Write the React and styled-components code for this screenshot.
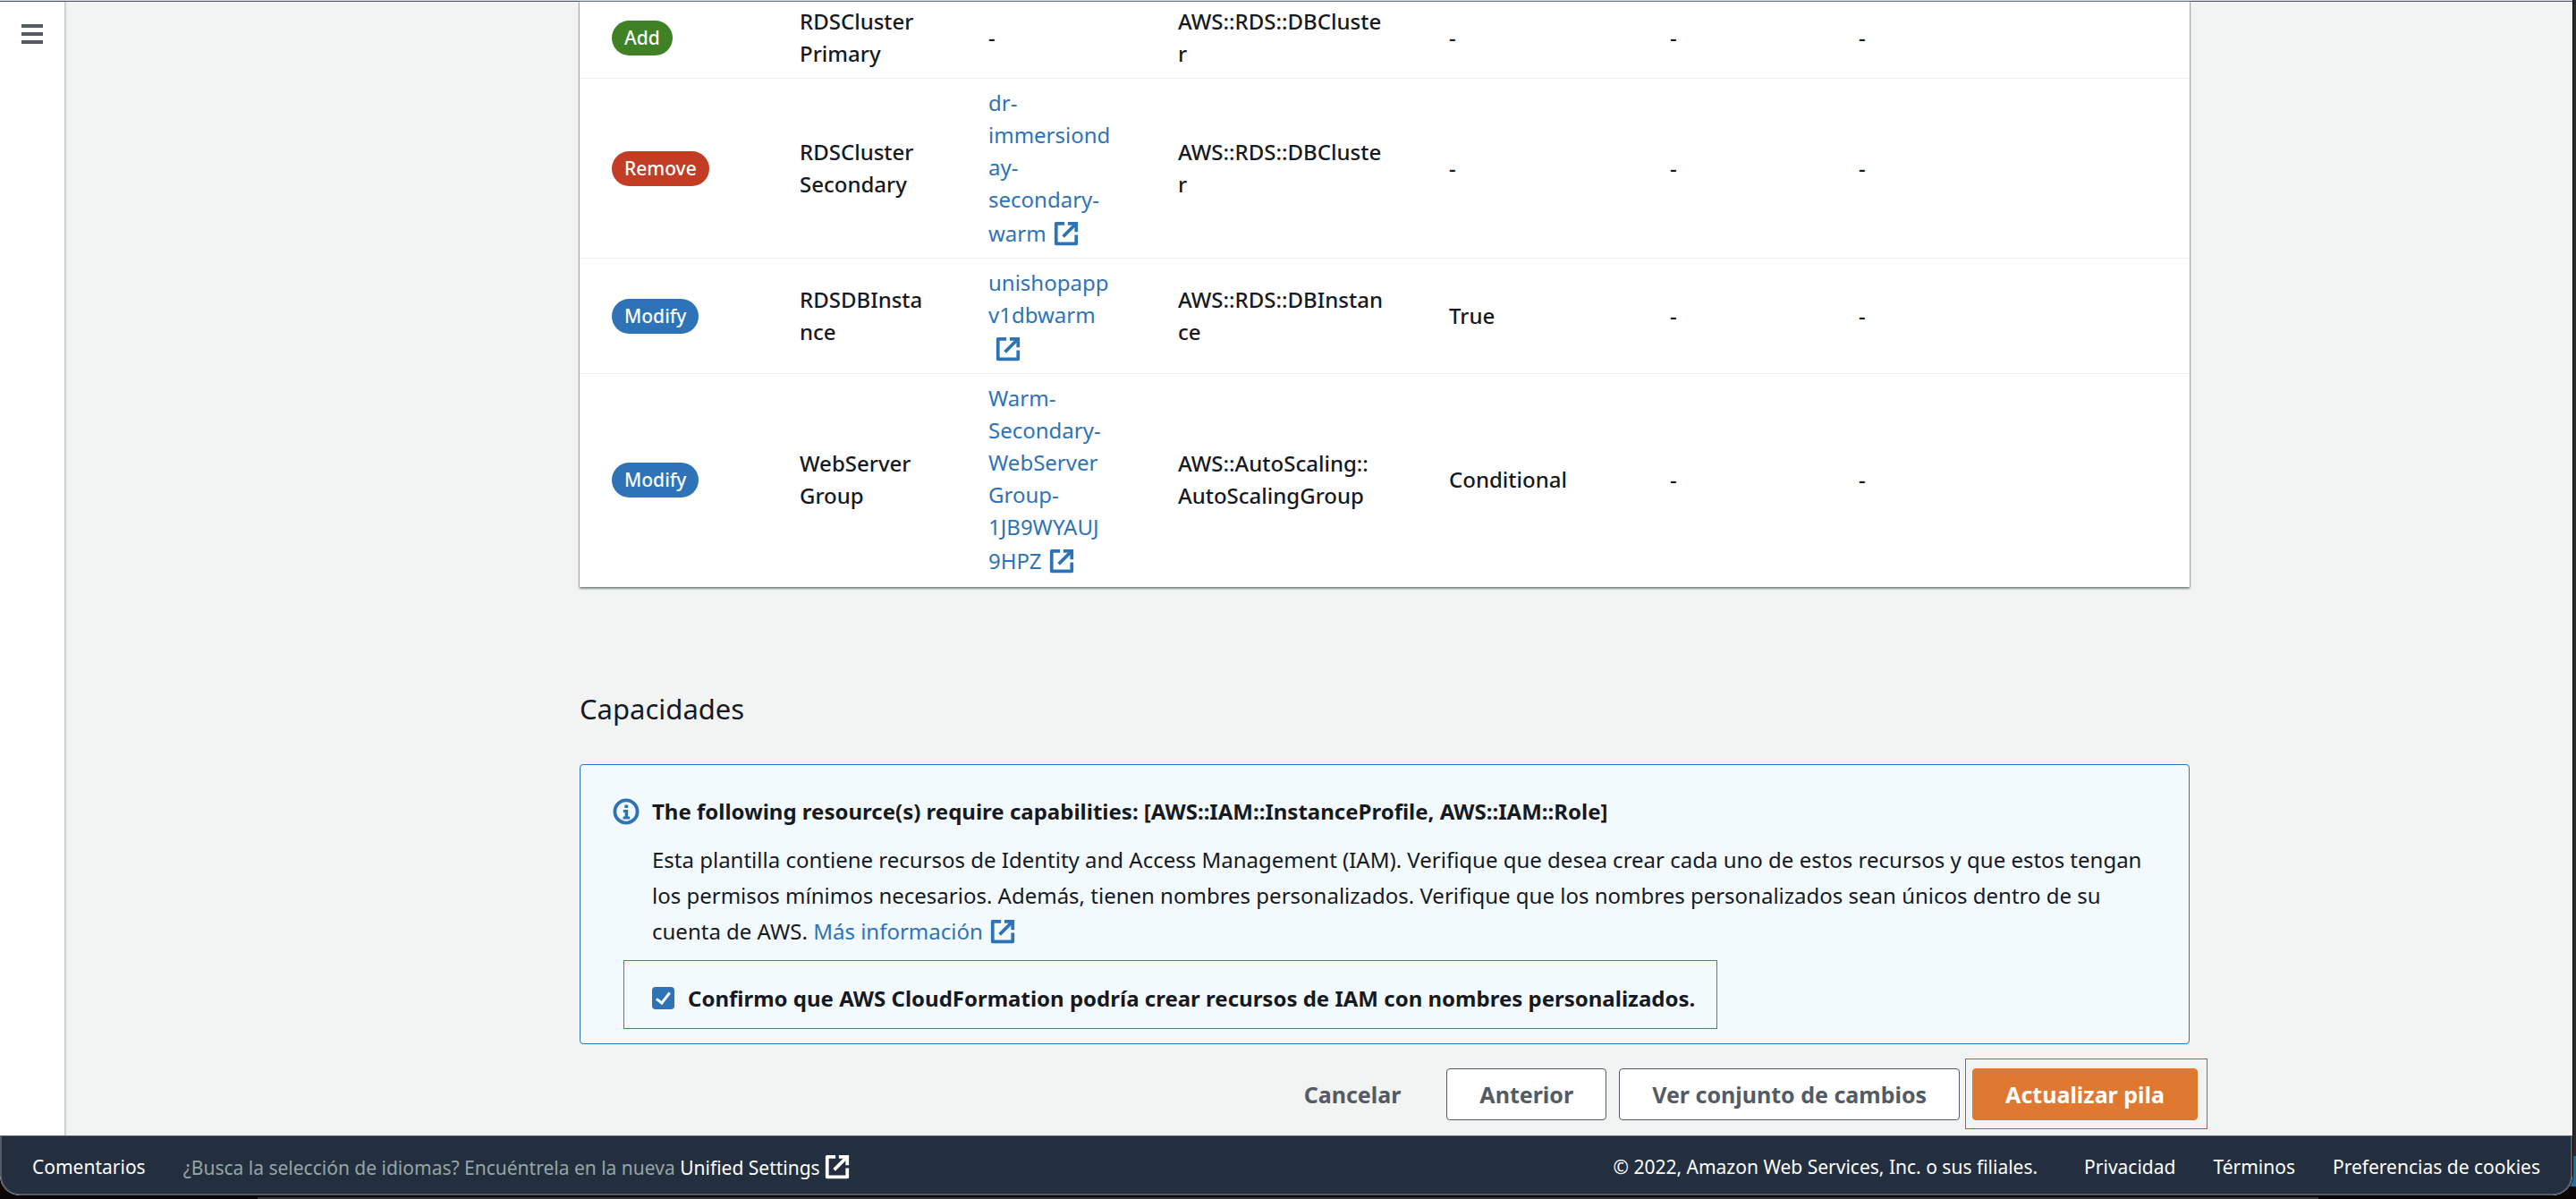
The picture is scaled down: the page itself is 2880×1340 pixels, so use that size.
import React from "react";
import styled, { createGlobalStyle } from "styled-components";

const color = {
  ink: "#16191f",
  muted: "#545b64",
  link: "#2e73b8",
  page: "#f2f3f3",
  line: "#eaeded",
  navy: "#232f3e",
  orange: "#df7831",
  mark: "#e8422a",
};

const GlobalStyle = createGlobalStyle`
  *, *::before, *::after { box-sizing: border-box; }
  html, body, #root { height: 100%; }
  body {
    margin: 0;
    overflow: hidden;
    background: #14060c;
    color: ${color.ink};
    font-family: "Noto Sans", "Open Sans", sans-serif;
    font-size: 24px;
    line-height: 36px;
  }
`;

const Desktop = styled.div`
  height: 100%;
  padding: 0 4px 4px 0;
  background:
    linear-gradient(#1f6fa5, #1f6fa5) right 0 bottom 14px / 24px 34px no-repeat,
    linear-gradient(#2b2b2b, #2b2b2b) right top / 3px 1292px no-repeat,
    linear-gradient(#3a3536, #3a3536) 50% 100% / 2304px 2px no-repeat,
    #0c0508;
`;

const Window = styled.div`
  height: 100%;
  display: flex;
  flex-direction: column;
  overflow: hidden;
  border-radius: 0 0 22px 22px;
  border-top: 1px solid #d5d9db;
  box-shadow: 0 0 0 1px #000;
  background: ${color.page};
`;

const Workspace = styled.div`
  flex: 1;
  min-height: 0;
  display: flex;
  border-top: 1px solid ${color.muted};
`;

const Sidebar = styled.nav`
  flex: none;
  width: 73px;
  padding: 22px 20px;
  background: #fff;
  border-right: 1px solid #c4c9ca;
  box-shadow: 1px 0 2px rgba(0, 28, 36, 0.15);
`;

const MenuButton = styled.button`
  display: block;
  width: 32px;
  height: 32px;
  padding: 0;
  border: 0;
  background: none;
  color: ${color.muted};
`;

const Main = styled.main`
  flex: 1;
  min-width: 0;
  display: grid;
  grid-template-columns: minmax(0, 575fr) minmax(0, 1800px) minmax(0, 428fr);
`;

const Content = styled.div`
  grid-column: 2;
  display: flex;
  flex-direction: column;
`;

const Card = styled.section`
  background: #fff;
  box-shadow: 0 2px 2px 0 #7d8889, 1px 0 1px #b9c0c1, -1px 0 1px #b9c0c1;
`;

const Table = styled.table`
  width: 100%;
  table-layout: fixed;
  border-collapse: collapse;
  font-weight: 500;
`;

const Col = styled.col`
  width: ${(p) => p.$w};
`;

const Row = styled.tr`
  & + & { border-top: 1px solid ${color.line}; }
  & > td { padding: 9px 36px; }
  &:first-child > td { padding-top: 4px; }
  &:last-child > td { padding-bottom: 11px; }
`;

const Cell = styled.td`
  vertical-align: middle;
  overflow-wrap: anywhere;
`;

const badgeColor = { Add: "#3f8124", Remove: "#c23d23", Modify: "#2e73b8" };

const Badge = styled.span`
  display: block;
  width: fit-content;
  padding: 0 14px;
  border-radius: 20px;
  background: ${(p) => badgeColor[p.$kind]};
  color: #fff;
  font-size: 21px;
  line-height: 39px;
`;

const Link = styled.a`
  color: ${(p) => (p.$light ? "#fff" : color.link)};
  font-weight: 400;
  text-decoration: none;
`;

const Glyph = styled.svg`
  display: inline-block;
  width: 30px;
  height: 30px;
  margin-top: 5px;
  margin-left: ${(p) => (p.$tight ? "4px" : "7px")};
  vertical-align: -6px;
  fill: none;
  stroke: currentColor;
  stroke-width: 2;
`;

const Heading = styled.h2`
  margin: 112px 0 38px;
  font-size: 31px;
  font-weight: 400;
  line-height: 48px;
`;

const Alert = styled.section`
  display: flex;
  gap: 13px;
  padding: 34px 35px 16px;
  border: 1px solid ${color.link};
  border-radius: 4px;
  background: #f2fafd;
`;

const InfoIcon = styled.svg`
  flex: none;
  width: 32px;
  height: 32px;
  margin-top: 2px;
  fill: ${color.link};
`;

const AlertBody = styled.div`
  flex: 1;
  min-width: 0;
`;

const AlertTitle = styled.h3`
  margin: 0 0 16px;
  font-size: 24px;
  font-weight: 700;
  line-height: 36px;
`;

const Paragraph = styled.p`
  margin: 0;
  line-height: 40px;
`;

const Confirm = styled.label`
  display: flex;
  align-items: center;
  gap: 15px;
  width: fit-content;
  height: 77px;
  margin: 12px 0 0 -32px;
  padding: 8px 24px 0 31px;
  border: 1px solid ${color.mark};
  font-weight: 700;
`;

const Checkbox = styled.input`
  flex: none;
  appearance: none;
  width: 25px;
  height: 25px;
  margin: 0;
  border-radius: 4px;
  background: ${color.link};
  display: grid;
  place-items: center;
  &:checked::before {
    content: "";
    width: 9px;
    height: 16px;
    margin-bottom: 4px;
    border: solid #fff;
    border-width: 0 3px 3px 0;
    rotate: 38deg;
  }
`;

const Actions = styled.div`
  display: flex;
  justify-content: flex-end;
  align-items: center;
  gap: 14px;
  margin: 16px -20px 0 0;
`;

const Button = styled.button`
  height: 58px;
  padding: 0 36px;
  border: 1px solid ${(p) => (p.$plain ? "transparent" : color.muted)};
  border-radius: 4px;
  background: ${(p) => (p.$plain ? "transparent" : "#fff")};
  color: ${color.muted};
  font: inherit;
  font-size: 25px;
  font-weight: 700;
  white-space: nowrap;
`;

const PrimaryButton = styled(Button)`
  border-color: ${color.orange};
  background: ${color.orange};
  color: #fff;
`;

const Highlight = styled.div`
  margin-left: -8px;
  padding: 10px 10px 9px 7px;
  border: 1px solid ${color.mark};
`;

const Footer = styled.footer`
  flex: none;
  height: 67px;
  display: flex;
  align-items: center;
  justify-content: space-between;
  padding: 3px 34px 0;
  border: solid ${color.muted};
  border-width: 1px 2px 2px;
  border-radius: 0 0 22px 22px;
  background: ${color.navy};
  color: #fff;
  font-size: 21px;
  line-height: 36px;
`;

const FooterGroup = styled.div`
  display: flex;
  align-items: center;
  gap: 42px;
`;

const FooterNote = styled.span`
  color: #95a5a6;
`;

const Copyright = styled.span`
  margin-right: 10px;
`;

function ExternalIcon({ tight }) {
  return (
    <Glyph viewBox="0 0 16 16" aria-hidden="true" $tight={tight}>
      <path d="M10 2h4v4" strokeLinecap="square" />
      <path d="m6.2 9.8 7.8-7.8" />
      <path d="M14 8.8V14H2V2h5" strokeLinejoin="round" />
    </Glyph>
  );
}

const rows = [
  { action: "Add", lines: ["RDSCluster", "Primary"], type: ["AWS::RDS::DBCluste", "r"], replace: "-" },
  {
    action: "Remove",
    lines: ["RDSCluster", "Secondary"],
    physical: ["dr-", "immersiond", "ay-", "secondary-", "warm"],
    type: ["AWS::RDS::DBCluste", "r"],
    replace: "-",
  },
  {
    action: "Modify",
    lines: ["RDSDBInsta", "nce"],
    physical: ["unishopapp", "v1dbwarm"],
    iconBelow: true,
    type: ["AWS::RDS::DBInstan", "ce"],
    replace: "True",
  },
  {
    action: "Modify",
    lines: ["WebServer", "Group"],
    physical: ["Warm-", "Secondary-", "WebServer", "Group-", "1JB9WYAUJ", "9HPZ"],
    type: ["AWS::AutoScaling::", "AutoScalingGroup"],
    replace: "Conditional",
  },
];

function Lines({ parts }) {
  return parts.map((part, i) => (
    <React.Fragment key={i}>
      {i > 0 && <br />}
      {part}
    </React.Fragment>
  ));
}

export default function App() {
  return (
    <>
      <GlobalStyle />
      <Desktop>
        <Window>
          <Workspace>
            <Sidebar>
              <MenuButton aria-label="Menú">
                <svg viewBox="0 0 32 32" width="32" height="32" fill="currentColor" aria-hidden="true">
                  <path d="M4 3h24v4H4zM4 12h24v4H4zM4 21h24v4H4z" />
                </svg>
              </MenuButton>
            </Sidebar>
            <Main>
              <Content>
                <Card>
                  <Table>
                    <colgroup>
                      <Col $w="210px" />
                      <Col $w="211px" />
                      <Col $w="212px" />
                      <Col $w="303px" />
                      <Col $w="247px" />
                      <Col $w="211px" />
                      <Col $w="auto" />
                    </colgroup>
                    <tbody>
                      {rows.map((row, i) => (
                        <Row key={i}>
                          <Cell><Badge $kind={row.action}>{row.action}</Badge></Cell>
                          <Cell><Lines parts={row.lines} /></Cell>
                          <Cell>
                            {row.physical ? (
                              <Link href="#recurso">
                                <Lines parts={row.physical} />
                                {row.iconBelow && <br />}
                                <ExternalIcon />
                              </Link>
                            ) : "-"}
                          </Cell>
                          <Cell><Lines parts={row.type} /></Cell>
                          <Cell>{row.replace}</Cell>
                          <Cell>-</Cell>
                          <Cell>-</Cell>
                        </Row>
                      ))}
                    </tbody>
                  </Table>
                </Card>

                <Heading>Capacidades</Heading>

                <Alert>
                  <InfoIcon viewBox="0 0 16 16" aria-hidden="true">
                    <circle cx="8" cy="8" r="6.3" fill="none" stroke={color.link} strokeWidth="1.9" />
                    <path d="M7.2 4.2h1.9V6H7.2zM6.4 7h2.7v3.7h1v1.5H6.3v-1.5h1V8.5h-.9z" />
                  </InfoIcon>
                  <AlertBody>
                    <AlertTitle>
                      The following resource(s) require capabilities: [AWS::IAM::InstanceProfile, AWS::IAM::Role]
                    </AlertTitle>
                    <Paragraph>
                      Esta plantilla contiene recursos de Identity and Access Management (IAM). Verifique que desea
                      crear cada uno de estos recursos y que estos tengan los permisos mínimos necesarios. Además,
                      tienen nombres personalizados. Verifique que los nombres personalizados sean únicos dentro de su
                      cuenta de AWS.{" "}
                      <Link href="#informacion">
                        Más información
                        <ExternalIcon />
                      </Link>
                    </Paragraph>
                    <Confirm>
                      <Checkbox type="checkbox" defaultChecked />
                      Confirmo que AWS CloudFormation podría crear recursos de IAM con nombres personalizados.
                    </Confirm>
                  </AlertBody>
                </Alert>

                <Actions>
                  <Button type="button" $plain>Cancelar</Button>
                  <Button type="button">Anterior</Button>
                  <Button type="button">Ver conjunto de cambios</Button>
                  <Highlight>
                    <PrimaryButton type="button">Actualizar pila</PrimaryButton>
                  </Highlight>
                </Actions>
              </Content>
            </Main>
          </Workspace>
          <Footer>
            <FooterGroup>
              <Link $light href="#comentarios">Comentarios</Link>
              <FooterNote>
                ¿Busca la selección de idiomas? Encuéntrela en la nueva{" "}
                <Link $light href="#settings">
                  Unified Settings
                  <ExternalIcon tight />
                </Link>
              </FooterNote>
            </FooterGroup>
            <FooterGroup>
              <Copyright>© 2022, Amazon Web Services, Inc. o sus filiales.</Copyright>
              <Link $light href="#privacidad">Privacidad</Link>
              <Link $light href="#terminos">Términos</Link>
              <Link $light href="#cookies">Preferencias de cookies</Link>
            </FooterGroup>
          </Footer>
        </Window>
      </Desktop>
    </>
  );
}
